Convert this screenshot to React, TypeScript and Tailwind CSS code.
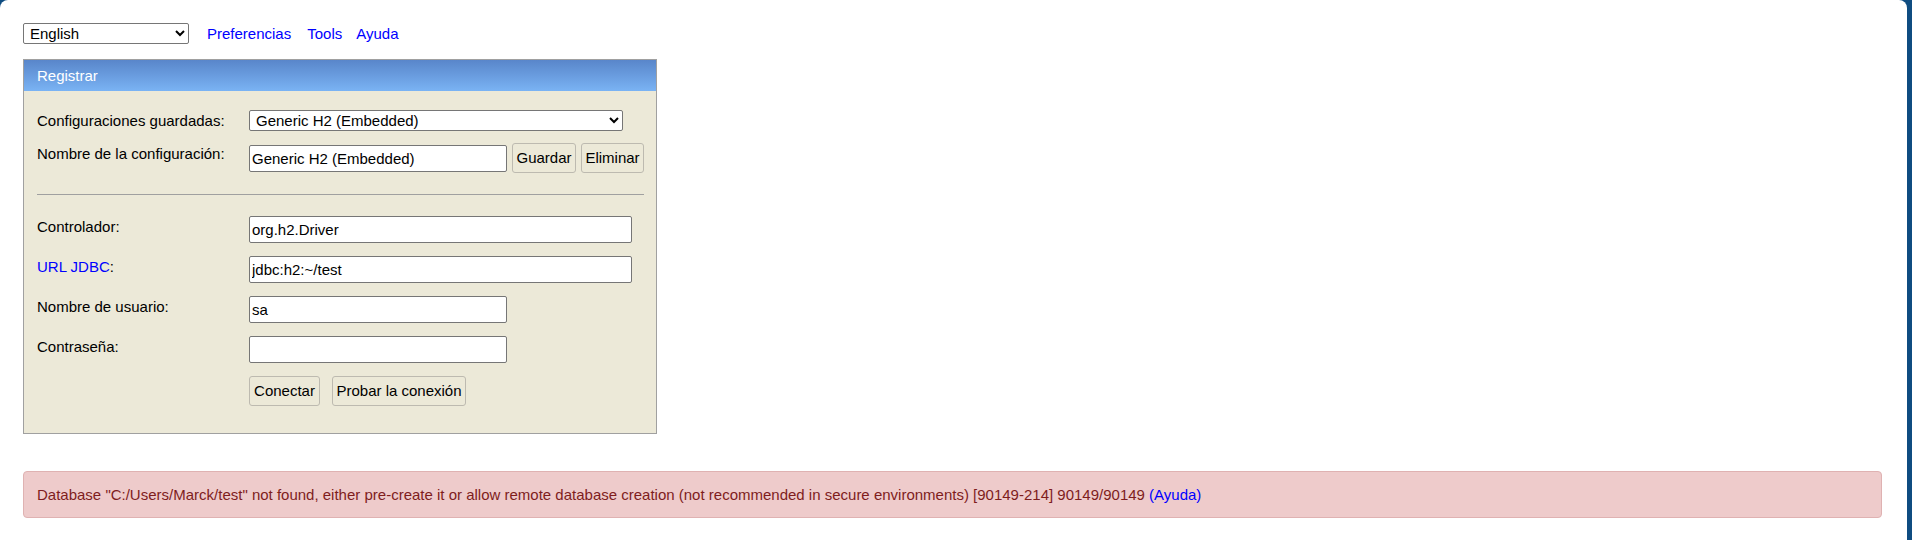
import React from 'react';

const inputCls =
  "h-[27px] rounded-[2px] border border-[#767676] bg-white px-[2px] text-[15px] text-black outline-none";
const btnCls =
  "h-[30px] whitespace-nowrap rounded-[3px] border border-[#bdbab0] bg-[#ece9d8] px-[3px] text-[15px] text-black";

const Row = ({ label, children, blue }: { label: string; children: React.ReactNode; blue?: boolean }) => (
  <div className="flex items-start">
    <div className="w-[212px] pt-[2px] leading-[17px]">
      {blue ? (
        <>
          <a className="text-[#0000ff]">URL JDBC</a>:
        </>
      ) : (
        label
      )}
    </div>
    {children}
  </div>
);

export default function App() {
  return (
    <div className="h-[540px] bg-[#0f4c81] pr-[5px] font-['Liberation_Sans',Arial,sans-serif] text-[15px] text-black">
      <div className="h-full rounded-t-lg bg-white pl-[23px] pr-[25px] pt-[23px]">
        {/* top bar */}
        <div className="flex h-[21px] items-start">
          <select
            defaultValue="en"
            className="h-[21px] w-[166px] rounded-[2px] border border-[#767676] bg-white pl-[2px] text-[15px]"
          >
            <option value="en">English</option>
          </select>
          <a className="ml-[18px] pt-[2px] leading-[17px] text-[#0000ff]">Preferencias</a>
          <a className="ml-[16px] pt-[2px] leading-[17px] text-[#0000ff]">Tools</a>
          <a className="ml-[14px] pt-[2px] leading-[17px] text-[#0000ff]">Ayuda</a>
        </div>

        {/* login panel */}
        <div className="mt-[15px] w-[634px] border border-[#a0a0a0] bg-[#ece9d8]">
          <div className="h-[31px] bg-linear-to-b from-[#5986ca] to-[#7ab3f4] pl-[13px] leading-[31px] text-white">
            Registrar
          </div>
          <div className="pb-[27px] pl-[13px] pr-[12px] pt-[19px]">
            <Row label="Configuraciones guardadas:">
              <select
                defaultValue="h2"
                className="h-[21px] w-[374px] rounded-[2px] border border-[#767676] bg-white pl-[2px] text-[15px]"
              >
                <option value="h2">Generic H2 (Embedded)</option>
              </select>
            </Row>
            <div className="mt-[12px]">
              <Row label="Nombre de la configuración:">
                <div className="flex items-start gap-[5px]">
                  <input readOnly defaultValue="Generic H2 (Embedded)" className={`${inputCls} mt-[2px] w-[258px]`} />
                  <button className={`${btnCls} w-[64px]`}>Guardar</button>
                  <button className={`${btnCls} w-[63px]`}>Eliminar</button>
                </div>
              </Row>
            </div>

            <div className="mt-[21px] h-px bg-[#a0a0a0]" />

            <div className="mt-[21px] flex flex-col gap-[13px]">
              <Row label="Controlador:">
                <input readOnly defaultValue="org.h2.Driver" className={`${inputCls} w-[383px]`} />
              </Row>
              <Row label="URL JDBC:" blue>
                <input readOnly defaultValue="jdbc:h2:~/test" className={`${inputCls} w-[383px]`} />
              </Row>
              <Row label="Nombre de usuario:">
                <input readOnly defaultValue="sa" className={`${inputCls} w-[258px]`} />
              </Row>
              <Row label="Contraseña:">
                <input readOnly type="password" defaultValue="" className={`${inputCls} w-[258px]`} />
              </Row>
              <div className="flex pl-[212px]">
                <button className={`${btnCls} w-[71px]`}>Conectar</button>
                <button className={`${btnCls} ml-[12px] w-[134px]`}>Probar la conexión</button>
              </div>
            </div>
          </div>
        </div>

        {/* error */}
        <div className="mt-[37px] h-[47px] rounded-[4px] border border-[#dfb2b2] bg-[#eecbcb] pl-[13px] leading-[45px] text-[#7f1d1d]">
          Database "C:/Users/Marck/test" not found, either pre-create it or allow remote database creation (not
          recommended in secure environments) [90149-214] 90149/90149{' '}
          <a className="text-[#0000ff]">(Ayuda)</a>
        </div>
      </div>
    </div>
  );
}
